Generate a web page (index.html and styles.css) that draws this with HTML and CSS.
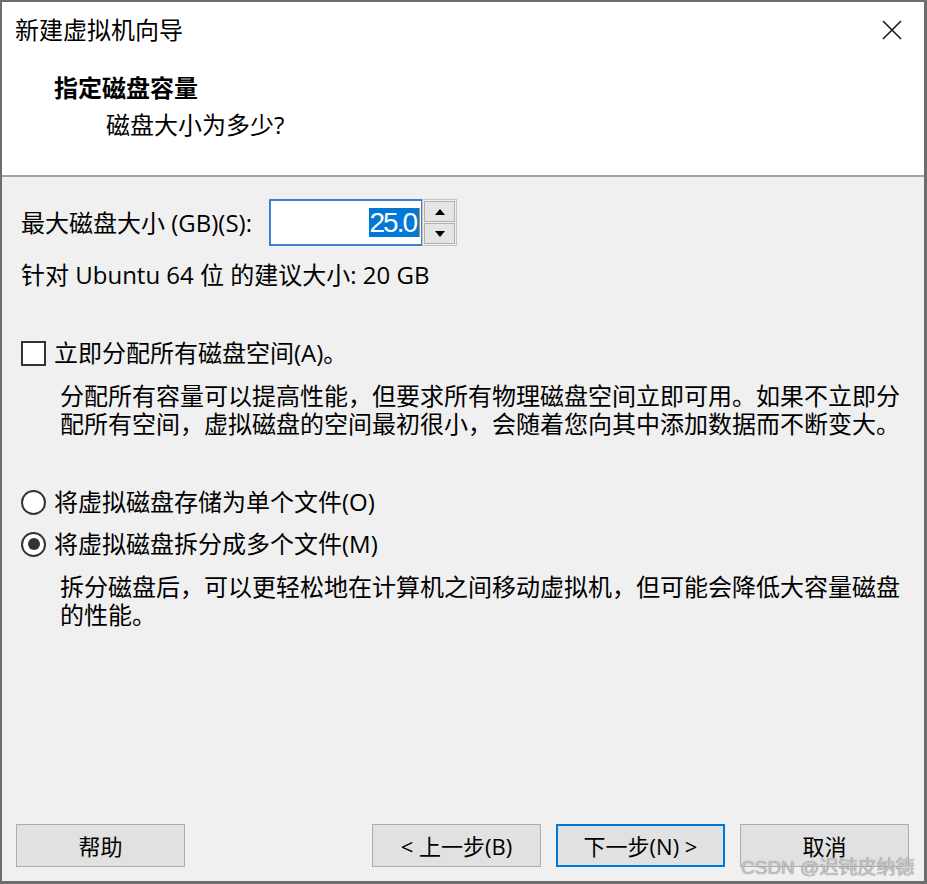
FILE: index.html
```html
<!DOCTYPE html>
<html lang="zh-CN">
<head>
<meta charset="utf-8">
<title>新建虚拟机向导</title>
<link rel="stylesheet" href="styles.css">
</head>
<body>
<div class="window">
  <header class="header">
    <div class="titlebar">
      <span class="title">新建虚拟机向导</span>
      <svg class="close" width="20" height="20" viewBox="0 0 20 20" aria-label="关闭">
        <path d="M1 1 L19 19 M19 1 L1 19" stroke="#1a1a1a" stroke-width="1.6" fill="none"/>
      </svg>
    </div>
    <div class="heading">指定磁盘容量</div>
    <div class="subheading">磁盘大小为多少?</div>
  </header>

  <main class="content">
    <div class="form">
      <div class="size-row">
        <label class="size-label">最大磁盘大小 (GB)(S):</label>
        <div class="spin">
          <div class="spin-input"><span class="sel">25.0</span><span class="caret"></span></div>
          <div class="spin-btns">
            <div class="spin-btn"><svg width="10" height="6" viewBox="0 0 10 6"><path d="M0 6 L5 0 L10 6 Z" fill="#000"/></svg></div>
            <div class="spin-btn"><svg width="10" height="6" viewBox="0 0 10 6"><path d="M0 0 L10 0 L5 6 Z" fill="#000"/></svg></div>
          </div>
        </div>
      </div>

      <div class="recommend">针对 Ubuntu 64 位 的建议大小: 20 GB</div>

      <div class="option check-row">
        <span class="checkbox"></span>
        <span>立即分配所有磁盘空间(A)。</span>
      </div>
      <p class="desc">分配所有容量可以提高性能，但要求所有物理磁盘空间立即可用。如果不立即分配所有空间，虚拟磁盘的空间最初很小，会随着您向其中添加数据而不断变大。</p>

      <div class="option radio-row first">
        <span class="radio"></span>
        <span>将虚拟磁盘存储为单个文件(O)</span>
      </div>
      <div class="option radio-row second">
        <span class="radio checked"></span>
        <span>将虚拟磁盘拆分成多个文件(M)</span>
      </div>
      <p class="desc">拆分磁盘后，可以更轻松地在计算机之间移动虚拟机，但可能会降低大容量磁盘的性能。</p>
    </div>

    <footer class="footer">
      <button class="btn help">帮助</button>
      <button class="btn">&lt; 上一步(B)</button>
      <button class="btn primary">下一步(N) &gt;</button>
      <button class="btn">取消</button>
    </footer>
  </main>

  <div class="watermark">CSDN @迟钝皮纳德</div>
</div>
</body>
</html>
```

FILE: styles.css
```css
* {
  box-sizing: border-box;
}

html, body {
  margin: 0;
  padding: 0;
  background: #f0f0f0;
}

body {
  font-family: "Open Sans", "Noto Sans CJK SC", sans-serif;
  font-size: 24px;
  color: #000;
}

.window {
  position: relative;
  width: 927px;
  height: 884px;
  border-style: solid;
  border-color: #6d6d6d;
  border-width: 2px 3px 3px 2px;
  display: flex;
  flex-direction: column;
  background: #f0f0f0;
  overflow: hidden;
}

.header {
  flex-shrink: 0;
  height: 175px;
  background: #fff;
  border-bottom: 2px solid #a3a3a3;
  padding: 13px 22px 0 13px;
}

.titlebar {
  display: flex;
  justify-content: space-between;
  align-items: center;
  height: 30px;
}

.title {
  line-height: 30px;
}

.close {
  display: block;
}

.heading {
  margin-top: 28px;
  padding-left: 39px;
  line-height: 30px;
  font-weight: 700;
}

.subheading {
  margin-top: 7px;
  padding-left: 91px;
  line-height: 30px;
}

.content {
  flex: 1;
  display: flex;
  flex-direction: column;
  padding: 22px 15px 14px 14px;
}

.form {
  padding-left: 5px;
}

.size-row {
  display: flex;
  align-items: center;
  height: 47px;
}

.size-label {
  width: 248px;
  line-height: 30px;
}

.spin {
  display: flex;
  height: 47px;
}

.spin-input {
  width: 153px;
  height: 47px;
  background: #fff;
  border: 2px solid #3b80d2;
  border-right-width: 1px;
  display: flex;
  justify-content: flex-end;
  align-items: center;
  padding-right: 1px;
}

.sel {
  background: #0078d7;
  color: #fff;
  font-family: "Liberation Sans", sans-serif;
  font-size: 28px;
  letter-spacing: -2px;
  line-height: 29px;
  padding: 0 3px 0 1px;
}

.caret {
  width: 1px;
  height: 29px;
  background: #e0892f;
}

.spin-btns {
  width: 35px;
  height: 47px;
  display: flex;
  flex-direction: column;
  gap: 1px;
  padding: 1px;
  border: 1px solid #c4c4c4;
  background: #f0f0f0;
}

.spin-btn {
  flex: 1;
  display: flex;
  align-items: center;
  justify-content: center;
  background: #e5e5e5;
  border: 1px solid #b0b0b0;
}

.recommend {
  margin-top: 14px;
  line-height: 30px;
}

.option {
  display: flex;
  align-items: center;
  gap: 8px;
  height: 30px;
  line-height: 30px;
}

.check-row {
  margin-top: 48px;
}

.checkbox {
  width: 25px;
  height: 25px;
  border: 2px solid #333;
  background: #fff;
  flex-shrink: 0;
}

.radio {
  width: 25px;
  height: 25px;
  border: 2px solid #333;
  border-radius: 50%;
  background: #fff;
  flex-shrink: 0;
  display: flex;
  align-items: center;
  justify-content: center;
}

.radio.checked::after {
  content: "";
  width: 12px;
  height: 12px;
  border-radius: 50%;
  background: #333;
}

.radio-row.first {
  margin-top: 49px;
}

.radio-row.second {
  margin-top: 12px;
}

.desc {
  margin: 14px 0 0;
  padding-left: 39px;
  line-height: 28px;
}

.footer {
  margin-top: auto;
  display: flex;
  gap: 15px;
}

.btn {
  width: 169px;
  height: 43px;
  border: 1px solid #adadad;
  background: #e1e1e1;
  font-family: "Open Sans", "Noto Sans CJK SC", sans-serif;
  font-size: 22px;
  line-height: 28px;
  color: #000;
  padding: 0;
}

.btn.help {
  margin-right: auto;
}

.btn.primary {
  border: 2px solid #0078d7;
}

.watermark {
  position: absolute;
  left: 739px;
  top: 855px;
  font-family: "Liberation Sans", "Noto Sans CJK SC", sans-serif;
  font-size: 19px;
  line-height: 21px;
  color: #c4c4c4;
  text-shadow: 0 0 1px #6f6f6f;
  white-space: nowrap;
}
```
